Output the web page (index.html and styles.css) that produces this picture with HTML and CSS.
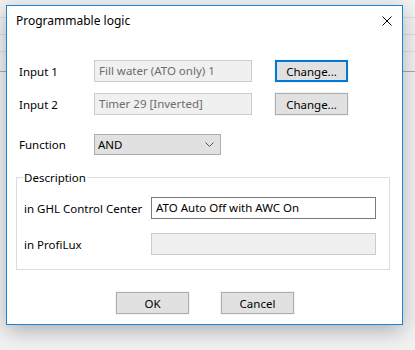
FILE: index.html
```html
<!DOCTYPE html>
<html lang="en">
<head>
    <meta charset="UTF-8">
    <title>Programmable logic</title>
    <link rel="stylesheet" href="styles.css">
</head>
<body>
    <div class="window">
        <div class="titlebar">
            <span class="title">Programmable logic</span>
            <svg class="close" width="10" height="10" viewBox="0 0 10 10">
                <path d="M0.5 0.5 L9.5 9.5 M9.5 0.5 L0.5 9.5" stroke="#000" stroke-width="1" fill="none"/>
            </svg>
        </div>

        <div class="content">
            <div class="row row-input1">
                <span class="label">Input 1</span>
                <div class="field disabled">Fill water (ATO only) 1</div>
                <button class="btn btn-default">Change...</button>
            </div>
            <div class="row row-input2">
                <span class="label">Input 2</span>
                <div class="field disabled">Timer 29 [Inverted]</div>
                <button class="btn">Change...</button>
            </div>
            <div class="row row-function">
                <span class="label">Function</span>
                <div class="select">
                    <span>AND</span>
                    <svg width="9" height="5" viewBox="0 0 9 5">
                        <path d="M0.5 0.5 L4.5 4.5 L8.5 0.5" stroke="#555" stroke-width="1" fill="none"/>
                    </svg>
                </div>
            </div>

            <fieldset class="group">
                <legend>Description</legend>
                <div class="grow grow-first">
                    <span class="glabel">in GHL Control Center</span>
                    <div class="field active">ATO Auto Off with AWC On</div>
                </div>
                <div class="grow">
                    <span class="glabel">in ProfiLux</span>
                    <div class="field disabled"></div>
                </div>
            </fieldset>

            <div class="actions">
                <button class="btn">OK</button>
                <button class="btn">Cancel</button>
            </div>
        </div>
    </div>
</body>
</html>
```

FILE: styles.css
```css
:root {
    --accent: #1a84d8;
    --btn-face: #e1e1e1;
    --btn-border: #adadad;
    --field-off: #f0f0f0;
    --field-off-border: #cccccc;
}
html, body {
    margin: 0;
    height: 100%;
}
body {
    font-family: 'Noto Sans', 'Open Sans', sans-serif;
    font-size: 11.5px;
    color: #000;
    background-color: #f2f2f2;
    background-image:
        linear-gradient(#a9a9a9, #a9a9a9),
        linear-gradient(#dedede, #dedede),
        linear-gradient(#dedede, #dedede),
        linear-gradient(#dedede, #dedede);
    background-size: 100% 1px;
    background-position: 0 71px, 0 17px, 0 34px, 0 51px;
    background-repeat: no-repeat;
    overflow: hidden;
    padding: 5px 0 0 6px;
    box-sizing: border-box;
}
.window {
    width: 397px;
    height: 320px;
    box-sizing: border-box;
    border: 1px solid var(--accent);
    background: #fff;
    box-shadow: 0 6px 20px rgba(0,0,0,0.28);
    display: flex;
    flex-direction: column;
}
.titlebar {
    height: 30px;
    display: flex;
    align-items: center;
    padding: 0 10px 0 9px;
    flex-shrink: 0;
}
.title {
    flex: 1;
    margin-top: -1px;
    font-size: 12px;
}
.close {
    margin-top: -1px;
}
.content {
    padding: 0 0 0 12px;
    display: flex;
    flex-direction: column;
}
.row {
    display: flex;
    align-items: center;
}
.label {
    width: 75px;
}
.row-input1 {
    margin-top: 24px;
}
.row-input2 {
    margin-top: 11px;
}
.row-function {
    margin-top: 19px;
}
.field {
    box-sizing: border-box;
    height: 22px;
    line-height: 20px;
    padding: 0 4px;
    white-space: nowrap;
    overflow: hidden;
}
.row .field {
    width: 158px;
}
.field.disabled {
    background: var(--field-off);
    border: 1px solid var(--field-off-border);
    color: #6d6d6d;
}
.field.active {
    background: #fff;
    border: 1px solid #7a7a7a;
}
.btn {
    font: inherit;
    color: #000;
    box-sizing: border-box;
    width: 73px;
    height: 22px;
    padding: 0;
    background: var(--btn-face);
    border: 1px solid var(--btn-border);
    box-shadow: 0 0 0 1px #f4f4f4;
}
.row .btn {
    margin-left: 23px;
}
.btn-default {
    border: 2px solid #0078d7;
}
.select {
    box-sizing: border-box;
    width: 127px;
    height: 21px;
    background: var(--btn-face);
    border: 1px solid var(--btn-border);
    display: flex;
    align-items: center;
    justify-content: space-between;
    padding: 0 6px 0 3px;
}
.group {
    margin: 15px 0 0 -3px;
    width: 374px;
    height: 100px;
    box-sizing: border-box;
    border: 1px solid #dcdcdc;
    padding: 0 0 0 7px;
}
.group legend {
    padding: 0 1px;
    margin-left: -1px;
}
.grow {
    display: flex;
    align-items: center;
}
.glabel {
    width: 127px;
}
.grow .field {
    width: 225px;
}
.grow-first {
    margin-top: 12px;
}
.grow + .grow {
    margin-top: 14px;
}
.actions {
    display: flex;
    margin-top: 22px;
    margin-left: 97px;
    gap: 32px;
}
```
